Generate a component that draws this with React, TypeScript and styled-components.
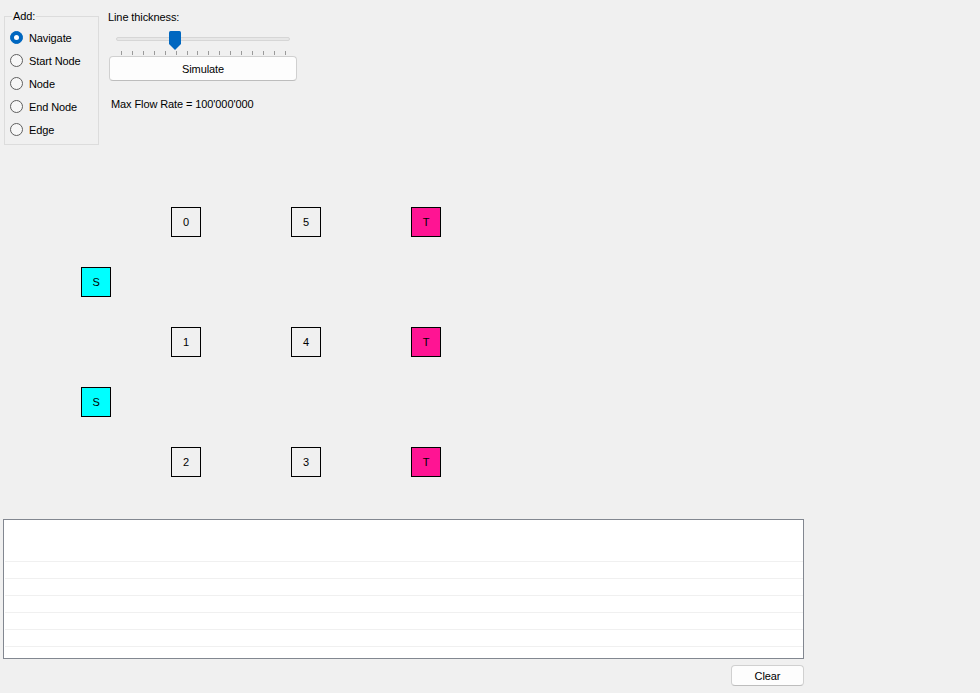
import React from "react";
import styled, { createGlobalStyle } from "styled-components";

const GlobalStyle = createGlobalStyle`
  html, body {
    margin: 0;
    padding: 0;
    background: #f0f0f0;
  }
  body {
    font-family: "Liberation Sans", Arial, sans-serif;
    font-size: 11px;
    letter-spacing: -0.1px;
    color: #000;
  }
  * { box-sizing: border-box; }
`;

const Window = styled.div`
  width: 980px;
  height: 693px;
  display: flex;
  flex-direction: column;
  background: #f0f0f0;
  overflow: hidden;
`;

const TopSection = styled.div`
  height: 150px;
  display: flex;
  align-items: flex-start;
  padding-left: 4px;
`;

const GroupBox = styled.div`
  position: relative;
  margin-top: 16px;
  width: 95px;
  height: 129px;
  border: 1px solid #dcdcdc;
  padding: 9px 0 3px 5px;
  display: flex;
  flex-direction: column;
`;

const GroupLabel = styled.span`
  position: absolute;
  top: -7px;
  left: 7px;
  padding: 0 1px;
  line-height: 13px;
  background: #f0f0f0;
`;

const RadioRow = styled.label`
  height: 23px;
  display: flex;
  align-items: center;
  gap: 6px;
  white-space: nowrap;
`;

const RadioCircle = styled.span<{ $checked?: boolean }>`
  width: 13px;
  height: 13px;
  border-radius: 50%;
  flex: none;
  display: flex;
  align-items: center;
  justify-content: center;
  background: ${(p) => (p.$checked ? "#0067c0" : "#f7f7f7")};
  border: 1px solid ${(p) => (p.$checked ? "#0067c0" : "#5f5f5f")};
  &::after {
    content: "";
    display: ${(p) => (p.$checked ? "block" : "none")};
    width: 5px;
    height: 5px;
    border-radius: 50%;
    background: #fff;
  }
`;

const ControlsColumn = styled.div`
  margin-left: 9px;
  padding-top: 11px;
  display: flex;
  flex-direction: column;
  width: 190px;
`;

const TextLine = styled.div`
  line-height: 13px;
  white-space: nowrap;
`;

const FlowText = styled(TextLine)`
  margin-top: 17px;
  padding-left: 3px;
`;

const Slider = styled.div`
  position: relative;
  height: 32px;
  width: 188px;
`;

const Track = styled.div`
  position: absolute;
  left: 8px;
  top: 13px;
  width: 174px;
  height: 4px;
  background: #e7e7e7;
  border: 1px solid #d6d6d6;
  border-radius: 2px;
`;

const Ticks = styled.div`
  position: absolute;
  left: 13px;
  top: 27px;
  width: 165px;
  height: 4px;
  display: flex;
  justify-content: space-between;
`;

const Tick = styled.span`
  width: 1px;
  height: 4px;
  background: #9a9a9a;
`;

const Thumb = styled.svg`
  position: absolute;
  left: 61px;
  top: 7px;
`;

const PushButton = styled.button<{ $w: number; $h: number }>`
  width: ${(p) => p.$w}px;
  height: ${(p) => p.$h}px;
  padding: 0;
  font: inherit;
  letter-spacing: -0.1px;
  color: #000;
  background: #fdfdfd;
  border: 1px solid #d0d0d0;
  border-bottom-color: #bdbdbd;
  border-radius: 4px;
  cursor: default;
`;

const SimulateButton = styled(PushButton)`
  margin-left: 1px;
`;

const Canvas = styled.div`
  position: relative;
  height: 369px;
`;

const NodeBox = styled.div<{ $kind: "start" | "end" | "mid" }>`
  position: absolute;
  width: 30px;
  height: 30px;
  border: 1px solid #000;
  display: flex;
  align-items: center;
  justify-content: center;
  background: ${(p) =>
    p.$kind === "start" ? "#00ffff" : p.$kind === "end" ? "#ff1493" : "transparent"};
`;

const LogBox = styled.div`
  margin-left: 3px;
  width: 801px;
  height: 140px;
  border: 1px solid #828790;
  background: #fff;
  padding-left: 1px;
  display: flex;
  flex-direction: column;
`;

const LogRow = styled.div<{ $h: number }>`
  height: ${(p) => p.$h}px;
  flex: none;
  border-bottom: 1px solid #f0f0f0;
`;

const Footer = styled.div`
  padding-top: 6px;
  padding-left: 731px;
`;

type Kind = "start" | "end" | "mid";
const nodes: { label: string; x: number; y: number; kind: Kind }[] = [
  { label: "0", x: 171, y: 57, kind: "mid" },
  { label: "5", x: 291, y: 57, kind: "mid" },
  { label: "T", x: 411, y: 57, kind: "end" },
  { label: "S", x: 81, y: 117, kind: "start" },
  { label: "1", x: 171, y: 177, kind: "mid" },
  { label: "4", x: 291, y: 177, kind: "mid" },
  { label: "T", x: 411, y: 177, kind: "end" },
  { label: "S", x: 81, y: 237, kind: "start" },
  { label: "2", x: 171, y: 297, kind: "mid" },
  { label: "3", x: 291, y: 297, kind: "mid" },
  { label: "T", x: 411, y: 297, kind: "end" },
];

const options = ["Navigate", "Start Node", "Node", "End Node", "Edge"];

export default function App() {
  return (
    <Window>
      <GlobalStyle />
      <TopSection>
        <GroupBox>
          <GroupLabel>Add:</GroupLabel>
          {options.map((o, i) => (
            <RadioRow key={o}>
              <RadioCircle $checked={i === 0} />
              {o}
            </RadioRow>
          ))}
        </GroupBox>
        <ControlsColumn>
          <TextLine>Line thickness:</TextLine>
          <Slider>
            <Track />
            <Ticks>
              {Array.from({ length: 16 }).map((_, i) => (
                <Tick key={i} />
              ))}
            </Ticks>
            <Thumb width="12" height="19" viewBox="0 0 12 19">
              <path d="M1.5 0 H10.5 Q12 0 12 1.5 V13 L6 19 L0 13 V1.5 Q0 0 1.5 0 Z" fill="#0067c0" />
            </Thumb>
          </Slider>
          <SimulateButton $w={188} $h={25}>Simulate</SimulateButton>
          <FlowText>Max Flow Rate = 100'000'000</FlowText>
        </ControlsColumn>
      </TopSection>
      <Canvas>
        {nodes.map((n, i) => (
          <NodeBox key={i} $kind={n.kind} style={{ left: n.x, top: n.y }}>
            {n.label}
          </NodeBox>
        ))}
      </Canvas>
      <LogBox>
        <LogRow $h={42} />
        {Array.from({ length: 5 }).map((_, i) => (
          <LogRow key={i} $h={17} />
        ))}
      </LogBox>
      <Footer>
        <PushButton $w={73} $h={21}>Clear</PushButton>
      </Footer>
    </Window>
  );
}
